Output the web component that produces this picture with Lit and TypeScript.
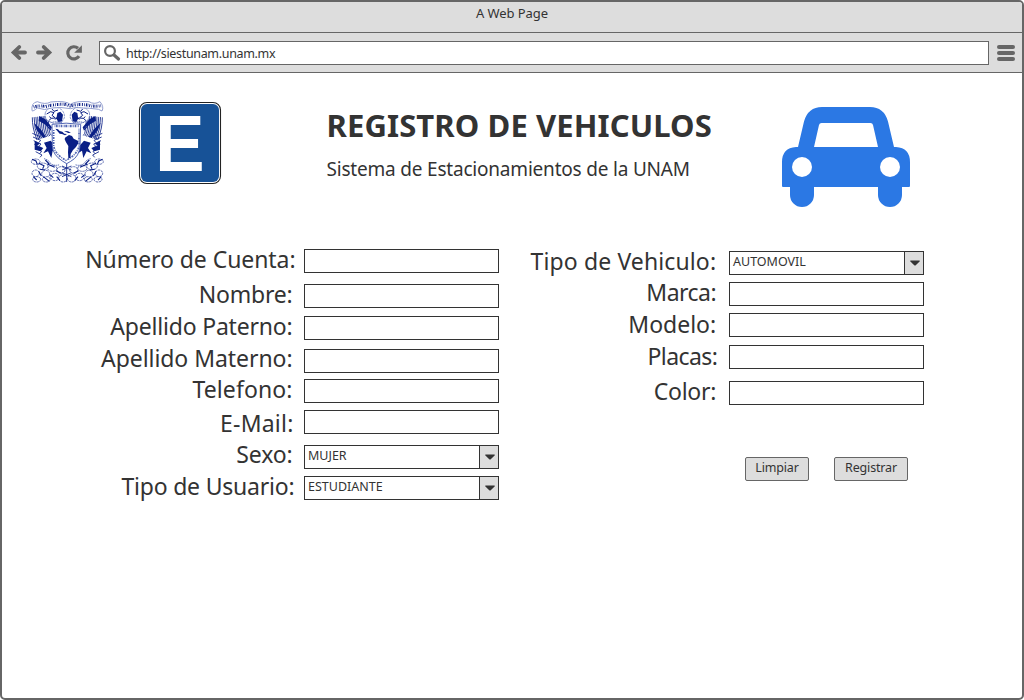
import { LitElement, html, svg, css } from "lit";
import { customElement, property } from "lit/decorators.js";

interface Field {
  label: string;
  /** distance to the next row */
  pitch: number;
  /** label drop inside the row */
  drop: number;
  /** space between the label and its control */
  gap: number;
  tracking: number;
  value?: string;
}

const PERSON: Field[] = [
  { label: "Número de Cuenta:", pitch: 35, drop: 1, gap: 8.5, tracking: -0.07 },
  { label: "Nombre:", pitch: 32, drop: 1, gap: 11.5, tracking: -0.2 },
  { label: "Apellido Paterno:", pitch: 33, drop: 1, gap: 11.5, tracking: -0.2 },
  { label: "Apellido Materno:", pitch: 30, drop: 0, gap: 11.5, tracking: -0.06 },
  { label: "Telefono:", pitch: 31, drop: 1, gap: 11.5, tracking: 0.1 },
  { label: "E-Mail:", pitch: 35, drop: 4, gap: 10.5, tracking: 0.2 },
  { label: "Sexo:", pitch: 31, drop: 0, gap: 11.5, tracking: -0.15, value: "MUJER" },
  { label: "Tipo de Usuario:", pitch: 30, drop: 1, gap: 9.5, tracking: -0.2, value: "ESTUDIANTE" },
];

const VEHICLE: Field[] = [
  { label: "Tipo de Vehiculo:", pitch: 31, drop: 1, gap: 12.8, tracking: 0.12, value: "AUTOMOVIL" },
  { label: "Marca:", pitch: 31, drop: 1, gap: 12.8, tracking: -0.5 },
  { label: "Modelo:", pitch: 32, drop: 2, gap: 12.8, tracking: 0 },
  { label: "Placas:", pitch: 36, drop: 2, gap: 11.8, tracking: -0.6 },
  { label: "Color:", pitch: 82, drop: 1, gap: 12.8, tracking: -0.25 },
];

@customElement("form-row")
export class FormRow extends LitElement {
  @property({ attribute: false }) field!: Field;

  static styles = css`
    :host { display: block; }
    .row { display: flex; align-items: flex-start; }
    .label {
      flex: 1; box-sizing: border-box; text-align: right; white-space: nowrap;
      font-size: 23px; line-height: 30px;
    }
    .control {
      flex: none; box-sizing: border-box; width: 195px; height: 24px; margin-top: 6px;
      border: 1px solid #333; background: #fff; display: flex;
    }
    .value { flex: 1; padding-left: 3px; font-size: 12.5px; line-height: 20px; white-space: nowrap; }
    .arrow {
      box-sizing: border-box; width: 19px; border-left: 1px solid #333; background: #ddd;
      display: flex; align-items: center; justify-content: center; padding-left: 2px;
    }
  `;

  render() {
    const f = this.field;
    return html`<div class="row" style="height:${f.pitch}px">
      <div class="label" style="padding:${f.drop}px ${f.gap}px 0 0;letter-spacing:${f.tracking}px">${f.label}</div>
      <div class="control">
        ${f.value
          ? html`<span class="value">${f.value}</span>
              <span class="arrow"><svg width="10" height="6" viewBox="0 0 10 6"><path d="M.6.5h8.800q.8.3.2 1L6 5Q5 6 4 5L.4 1.500Q-.2.8.6.5Z" fill="#333"/></svg></span>`
          : ""}
      </div>
    </div>`;
  }
}

const NAVY = "#0a1f86";

/** feathers of one wing; the other wing is the same drawing mirrored */
const feathers = () => {
  const out = [];
  for (let i = 0; i < 10; i++) {
    const x = 37 + i * 5.4;
    out.push(svg`<path d="M${x} ${82 - i * 0.6}Q${x - 1} ${112 + i * 2} ${x + 14 - i * 0.6} ${150 - i * 1.5}"/>`);
  }
  for (let i = 0; i < 6; i++) {
    const y = 130 + i * 11;
    out.push(svg`<path d="M${37 + i * 2} ${y}l${24 - i} 10l-6 7"/>`);
  }
  return out;
};

const halfEmblem = () => svg`
  <g fill="none" stroke="${NAVY}" stroke-width="2.500">${feathers()}</g>
  <path d="M42 98L50 120L70 144L78 140L62 118ZM58 78L76 88L96 112L92 122L76 104L56 92ZM44 152l16 9l-10 6l20 7l-8 10l-18 -5zM72 158l20 -6l12 14l6 24l-12 -8l-4 22l-10 -20l-14 6l10 -16z" fill="${NAVY}"/>
  <path d="M76 68q8 -17 24 -15q16 -4 25 7q10 9 8 24l-8 12l-24 4l-18 -8q-10 -10 -7 -24z" fill="#fff" stroke="#5266b4" stroke-width="2" stroke-dasharray="8 2"/>
  <path d="M112 69l9 -4l8 9l-3 20l-11 3l-5 -10l-7 2l7 -8z" fill="${NAVY}"/>
  <path d="M80 72l12 -7l10 3l-6 8l10 8l-12 1l-8 7M96 57l6 7l12 -4M88 80l6 5" fill="none" stroke="${NAVY}" stroke-width="3"/>
  <path d="M92 98q16 -5 34 0M84 108l7 8" fill="none" stroke="#5266b4" stroke-width="3" stroke-dasharray="4 2"/>
  <g fill="#fff" stroke="${NAVY}" stroke-width="1.900" stroke-dasharray="7 2">
    <ellipse cx="47" cy="215" rx="13" ry="8"/><ellipse cx="68" cy="229" rx="16" ry="10"/>
    <ellipse cx="47" cy="250" rx="11" ry="10"/><ellipse cx="50" cy="268" rx="12" ry="8"/>
    <ellipse cx="77" cy="252" rx="12" ry="11"/><ellipse cx="79" cy="268" rx="12" ry="8"/>
    <ellipse cx="97" cy="235" rx="14" ry="9"/><ellipse cx="105" cy="261" rx="13" ry="11"/>
    <ellipse cx="123" cy="240" rx="12" ry="10"/><ellipse cx="129" cy="265" rx="13" ry="11"/>
  </g>
  <path d="M36 208l12 5l4 10M56 220l16 7l-4 9M82 222l22 10M56 244l8 14M90 254l10 9M108 242l16 8M40 260l10 10M70 260l18 14M110 260l10 12M76 210l12 12M60 238l14 2" fill="none" stroke="${NAVY}" stroke-width="3.200"/>
  <path d="M72 206q14 3 20 15q12 8 27 3" fill="none" stroke="#5266b4" stroke-width="3" stroke-dasharray="4 2"/>
`;

const emblem = html`<svg class="emblem" width="100" height="105" viewBox="0 0 300 315">
  <g>${halfEmblem()}</g>
  <g transform="translate(284 0) scale(-1 1)">${halfEmblem()}</g>
  <path d="M36 62Q33 38 52 35Q76 45 92 36Q137 31 151 43Q168 32 207 35Q222 45 240 35Q253 51 246 63Q234 56 228 57Q207 54 190 54Q166 50 151 56Q122 50 96 54Q73 63 52 54Q39 65 36 62Z" fill="#fff" stroke="#7d8bc6" stroke-width="2.500"/>
  <path d="M41 51Q60 45 75 50Q100 43 128 43Q140 43 150 48Q174 41 204 45Q220 51 243 47" fill="none" stroke="${NAVY}" stroke-width="9" stroke-dasharray="2 3 4 2 1 3 3 4"/>
  <path d="M96 103Q138 96 182 103L180 167Q179 199 152 214L140 221L127 213Q98 195 97 167Z" fill="#fff" stroke="#5266b4" stroke-width="3"/>
  <path d="M104 108H176" fill="none" stroke="#5266b4" stroke-width="8" stroke-dasharray="2 2 5 2 1 2"/>
  <path d="M101 120V166Q104 193 138 211Q174 193 177 166V116" fill="none" stroke="#5266b4" stroke-width="5" stroke-dasharray="3 3 6 3"/>
  <path d="M106 116l8 2l5 5l8 2l6 6l8 1l-6 4l-9 -4l-7 -1l-7 -8zM132 123l12 1l9 4l-8 1zM135 143l12 -8l9 3l5 8l14 7l-1 8l-6 10l-9 9l-7 12l-1 12l-6 1l-1 -18l1 -19l-7 -11l-4 -9z" fill="${NAVY}"/>
  <path d="M140 221V276M126 228l28 12M126 248l28 12M154 228l-28 12M154 248l-28 12" fill="none" stroke="${NAVY}" stroke-width="2.500"/>
</svg>`;

const sign = html`<svg width="100" height="95" viewBox="0 0 100 95">
  <rect x="9.500" y="7.500" width="81" height="81" rx="7.500" fill="#fff" stroke="#222" stroke-width="1.100"/>
  <rect x="11" y="9" width="78" height="78" rx="6" fill="#175297"/>
  <text class="sign-letter" transform="translate(25 75.800) scale(.925 1)">E</text>
</svg>`;

const car = html`<svg class="car" width="128" height="100" viewBox="0 0 128 100">
  <path fill="#2b78e4" fill-rule="evenodd" d="M16 40L22 14.500Q26 0 40 0H88Q102 0 106 14.500L112 40H114Q128 41 128 55V79Q128 80 127 80H120V88A12 12 0 0 1 96 88V80H32V88A12 12 0 0 1 8 88V80H1Q0 80 0 79V55Q0 41 14 40ZM32 40H96L91 18Q90.500 16 88.500 16H39.500Q37.500 16 37 18Z"/>
  <circle cx="20" cy="60" r="10" fill="#fff"/><circle cx="108" cy="60" r="10" fill="#fff"/>
</svg>`;

@customElement("app-root")
export class AppRoot extends LitElement {
  static styles = css`
    :host { display: block; height: 700px; font-family: "Noto Sans", "Open Sans", sans-serif; color: #333; background: #fff; }
    svg { display: block; flex: none; }
    .window {
      box-sizing: border-box; width: 1024px; height: 700px; overflow: hidden;
      border: 2px solid #666; border-radius: 5px; background: #fff;
    }
    .title-bar {
      height: 30px; background: #ddd; border-bottom: 1px solid #666; text-align: center;
      font-size: 13px; line-height: 22px; letter-spacing: -0.08px;
    }
    .toolbar { height: 39px; background: #ddd; border-bottom: 1px solid #666; display: flex; align-items: flex-start; }
    .nav { margin: 10px 0 0 8px; }
    .address {
      box-sizing: border-box; width: 890px; height: 24px; margin: 8px 8px 0 13px;
      border: 1px solid #666; background: #fff; display: flex; align-items: flex-start;
    }
    .search { margin: 3px 5px 0 4px; }
    .url { font-size: 12.5px; line-height: 23px; letter-spacing: -0.33px; white-space: nowrap; }
    .menu { margin-top: 12px; }
    .header { display: flex; align-items: flex-start; height: 170px; padding-left: 18px; box-sizing: border-box; }
    .emblem { margin: 17px 10px 0 0; }
    .sign { margin-top: 22px; }
    .sign-letter { font: bold 80.500px "Liberation Sans", Arial, sans-serif; fill: #fff; }
    .heading { width: 455px; margin: 32px 0 0 96.500px; }
    .title { margin: 0; font-size: 31px; line-height: 40px; font-weight: 700; letter-spacing: 0.11px; white-space: nowrap; }
    .subtitle { margin: 11px 0 0; font-size: 19px; line-height: 26px; letter-spacing: -0.2px; white-space: nowrap; }
    .car { margin-top: 34px; }
    .form { display: flex; align-items: flex-start; }
    .person { width: 497px; }
    .vehicle { width: 425px; padding-top: 2px; }
    .actions { display: flex; justify-content: flex-end; gap: 25px; padding-right: 16px; }
    .button {
      box-sizing: border-box; width: 64px; height: 24px; padding: 0 0 3px; margin: 0;
      border: 1px solid #666; border-radius: 2px; background: #ddd; color: #333;
      font: 12.5px/19px "Noto Sans", sans-serif; letter-spacing: -0.15px; text-align: center;
    }
    .wide { width: 74px; }
  `;

  render() {
    return html`<div class="window">
      <div class="title-bar">A Web Page</div>
      <div class="toolbar">
        <svg class="nav" width="76" height="20" viewBox="0 0 76 20">
          <g fill="none" stroke="#666" stroke-width="3.800" stroke-linecap="round">
            <path d="M5 9.500H15M9.300 4L3.600 9.500L9.300 15" />
            <path d="M28 9.500H38M33.700 4L39.400 9.500L33.700 15" />
          </g>
          <path d="M69 13.200A6.100 6.100 0 1 1 68 5.300" fill="none" stroke="#666" stroke-width="3.200"/>
          <path d="M71.900 2.300V9.800H64.200Z" fill="#666"/>
        </svg>
        <div class="address">
          <svg class="search" width="17" height="17" viewBox="0 0 17 17">
            <circle cx="6" cy="6" r="4.900" fill="none" stroke="#666" stroke-width="2.200"/>
            <path d="M10 10L14.500 14" stroke="#666" stroke-width="3.200" stroke-linecap="round"/>
          </svg>
          <span class="url">http://siestunam.unam.mx</span>
        </div>
        <svg class="menu" width="18" height="17" viewBox="0 0 18 17">
          <g fill="#666"><rect width="18" height="4" rx="2"/><rect y="6" width="18" height="4" rx="2"/><rect y="12" width="18" height="4" rx="2"/></g>
        </svg>
      </div>
      <div class="header">
        ${emblem}
        <div class="sign">${sign}</div>
        <div class="heading">
          <h1 class="title">REGISTRO DE VEHICULOS</h1>
          <p class="subtitle">Sistema de Estacionamientos de la UNAM</p>
        </div>
        ${car}
      </div>
      <div class="form">
        <div class="person">${PERSON.map((f) => html`<form-row .field=${f}></form-row>`)}</div>
        <div class="vehicle">
          ${VEHICLE.map((f) => html`<form-row .field=${f}></form-row>`)}
          <div class="actions">
            <button class="button">Limpiar</button>
            <button class="button wide">Registrar</button>
          </div>
        </div>
      </div>
    </div>`;
  }
}
